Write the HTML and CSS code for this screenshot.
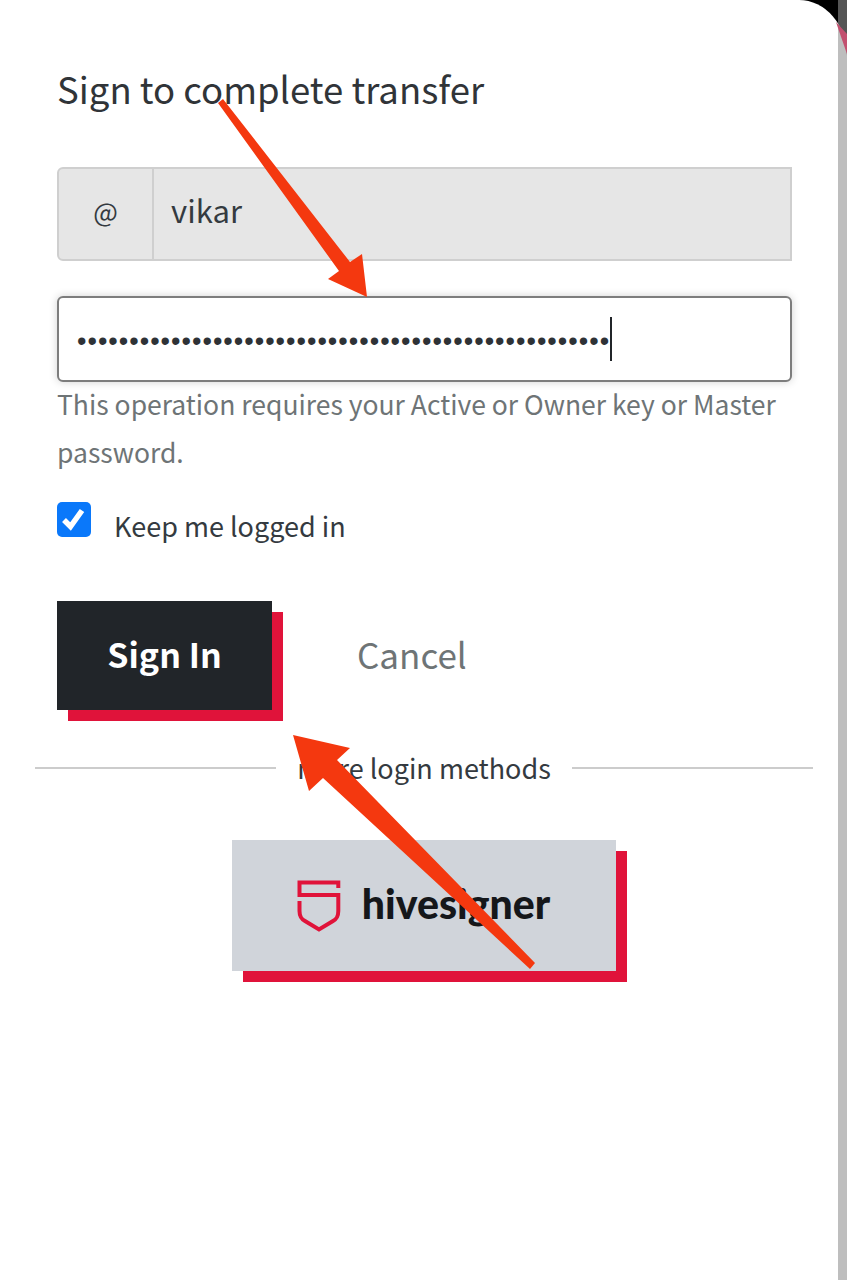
FILE: index.html

```html
<!DOCTYPE html>
<html lang="en">
<head>
  <meta charset="UTF-8">
  <meta name="viewport" content="width=device-width, initial-scale=1.0">
  <title>Sign to complete transfer</title>
  <link rel="stylesheet" href="styles.css">
</head>
<body>
  <div class="sheet">
    <form class="login-form">
      <h1 class="title">Sign to complete transfer</h1>

      <div class="input-group">
        <span class="addon">@</span>
        <span class="username">vikar</span>
      </div>

      <div class="password">
        <span class="dots">•••••••••••••••••••••••••••••••••••••••••••••••••••</span>
        <span class="caret"></span>
      </div>
      <p class="help">This operation requires your Active or Owner key or Master password.</p>

      <label class="keep">
        <span class="checkbox">
          <svg viewBox="0 0 34 34" width="34" height="34">
            <path d="M7 18l6.500 6.500L25 8.500" fill="none" stroke="#fff" stroke-width="5.500"/>
          </svg>
        </span>
        <span>Keep me logged in</span>
      </label>

      <div class="actions">
        <button type="button" class="btn-signin">Sign In</button>
        <button type="button" class="btn-cancel">Cancel</button>
      </div>
    </form>

    <div class="divider">
      <span class="line"></span>
      <span class="divider-text">more login methods</span>
      <span class="line"></span>
    </div>

    <div class="methods">
      <button type="button" class="btn-hivesigner">
        <svg viewBox="0 0 44 52" width="44" height="52">
          <path d="M41.300 8V2.500H2.500V15H41.300V31C41.300 37 39.500 39 36 41L22 49.500L8 41C4.500 39 2.500 37 2.500 31V21" fill="none" stroke="#e0133a" stroke-width="4"/>
        </svg>
        <span class="brand">hivesigner</span>
      </button>
    </div>
  </div>

  <div class="scroll-strip"></div>

  <!-- arrows drawn on top of the screenshot, plus the pink sliver in the corner -->
  <svg class="arrows" viewBox="0 0 847 1280" width="847" height="1280">
    <polygon class="sliver" points="836,22 847,34 847,54 838,28"/>
    <polygon points="218,103 223,99 350,262 362,254 367,297 328,279 339,271"/>
    <polygon points="293,735 350,748 337,760 535,963 530,969 323,778 309,791"/>
  </svg>
</body>
</html>
```

FILE: styles.css

```css
html, body {
  margin: 0;
  padding: 0;
}
body {
  position: relative;
  width: 847px;
  height: 1280px;
  overflow: hidden;
  background-color: #000;
  font-family: "Noto Sans CJK JP", "Noto Sans", sans-serif;
  color: #212529;
}
.sheet {
  box-sizing: border-box;
  height: 1280px;
  padding: 0 34px 0 35px;
  background-color: #fff;
  border-top-right-radius: 48px 56px;
}
.login-form {
  padding: 0 21px 0 22px;
}
.title {
  margin: 0;
  padding-top: 63px;
  height: 167px;
  box-sizing: border-box;
  font-size: 36.500px;
  line-height: 52px;
  font-weight: 400;
  color: #303438;
}
.input-group {
  display: flex;
  height: 94px;
  box-sizing: border-box;
  background-color: #e6e6e6;
  border: 2px solid #cfcfcf;
  border-radius: 6px 0 0 6px;
  font-size: 31px;
  color: #343a40;
}
.addon {
  flex: none;
  box-sizing: border-box;
  width: 95px;
  padding-bottom: 8px;
  display: flex;
  align-items: center;
  justify-content: center;
  border-right: 2px solid #cfcfcf;
  font-size: 26px;
}
.username {
  display: flex;
  align-items: center;
  padding: 0 0 9px 17px;
}
.password {
  display: flex;
  align-items: center;
  box-sizing: border-box;
  height: 86px;
  margin-top: 35px;
  padding-left: 18px;
  background-color: #fff;
  border: 2px solid #7d7d7d;
  border-radius: 6px;
  box-shadow: 0 0 8px rgba(0, 0, 0, 0.18);
}
.dots {
  padding-top: 4px;
  font-family: "Liberation Sans", sans-serif;
  font-size: 27px;
  letter-spacing: 1px;
  line-height: 40px;
  color: #2e3236;
  white-space: nowrap;
}
.caret {
  width: 2px;
  height: 44px;
  background-color: #212529;
}
.help {
  margin: -2px 0 0;
  font-size: 26.500px;
  line-height: 48px;
  color: #6e7476;
}
.keep {
  display: flex;
  align-items: flex-start;
  margin-top: 26px;
  font-size: 27px;
  line-height: 48px;
  color: #343a40;
}
.checkbox {
  flex: none;
  width: 34px;
  height: 35px;
  margin-right: 23px;
  background-color: #0a78fa;
  border-radius: 5px;
}
.checkbox svg {
  display: block;
}
.actions {
  display: flex;
  align-items: center;
  margin-top: 51px;
}
.btn-signin {
  width: 215px;
  height: 109px;
  padding: 0 0 4px;
  border: none;
  background-color: #212529;
  box-shadow: 11px 11px 0 #e0133a;
  color: #fff;
  font-family: inherit;
  font-size: 34px;
  font-weight: 700;
}
.btn-cancel {
  margin-left: 85px;
  padding: 0 0 4px;
  border: none;
  background: none;
  color: #6e7476;
  font-family: inherit;
  font-size: 35px;
}
.divider {
  display: flex;
  align-items: center;
  justify-content: space-between;
  height: 60px;
  margin-top: 28px;
}
.line {
  width: 241px;
  height: 2px;
  background-color: #cccccc;
}
.divider-text {
  padding-bottom: 2px;
  font-size: 27px;
  color: #343a40;
}
.methods {
  display: flex;
  justify-content: center;
  margin-top: 42px;
  padding-right: 1px;
}
.btn-hivesigner {
  display: flex;
  align-items: center;
  justify-content: center;
  gap: 21px;
  width: 384px;
  height: 131px;
  padding: 0;
  border: none;
  background-color: #d0d4da;
  box-shadow: 11px 11px 0 #e0133a;
}
.brand {
  padding-bottom: 4px;
  font-family: Lato, sans-serif;
  font-size: 41px;
  font-weight: 900;
  color: #15171a;
}
.scroll-strip {
  position: absolute;
  top: 0;
  right: 0;
  width: 9px;
  height: 1280px;
  background-color: rgba(144, 144, 144, 0.59);
}
.arrows {
  position: absolute;
  top: 0;
  left: 0;
  fill: #f4380f;
}
.sliver {
  fill: #c2506f;
}
```
